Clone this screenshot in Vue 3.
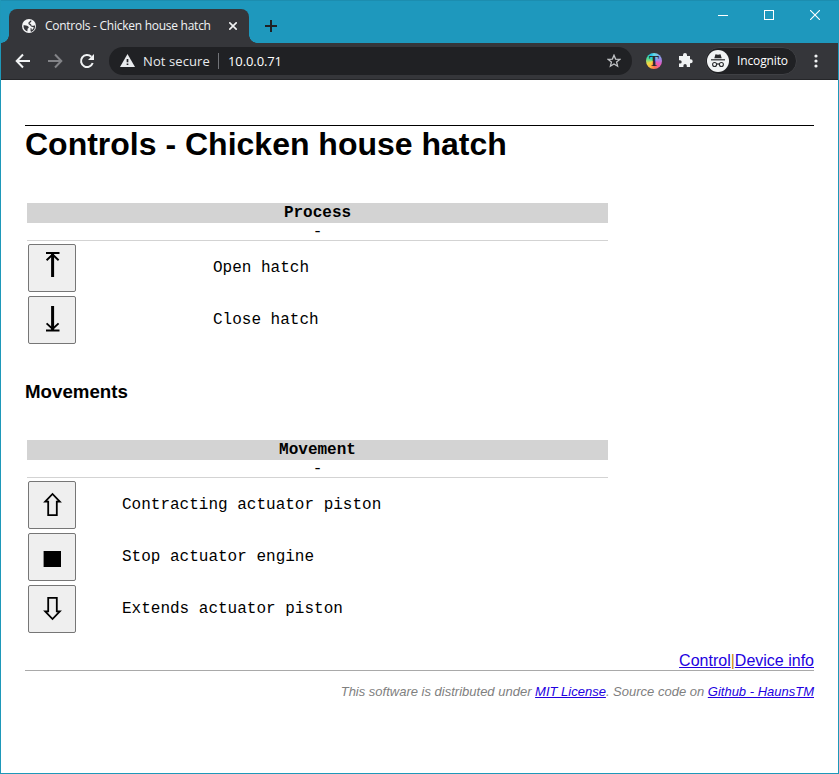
<script setup>
const processes = [
  { icon: 'top', label: 'Open hatch' },
  { icon: 'bottom', label: 'Close hatch' },
]
const movements = [
  { icon: 'up', label: 'Contracting actuator piston' },
  { icon: 'stop', label: 'Stop actuator engine' },
  { icon: 'down', label: 'Extends actuator piston' },
]
const sections = [
  { name: 'process', title: 'Process', rows: processes },
  { name: 'movement', title: 'Movement', rows: movements },
]
</script>

<template>
  <div class="window">
    <header class="titlebar">
      <div class="tab">
        <svg class="globe" width="14" height="14" viewBox="0 0 14 14">
          <circle cx="7" cy="7" r="7" fill="#f4f5f6" />
          <path d="M9 1.7C8.8 3.2 7.2 3 6.9 4.2 6.6 5.2 8.6 5 8.9 6.4 9.2 7.6 10.4 7.6 12.5 7.2 12.4 9.4 11.3 11.3 9.3 12.1 8.6 10.8 10 10.2 8.6 9.4" fill="none" stroke="#35363a" stroke-width="1.2" />
          <path d="M1.5 6.2C3 6.2 4.8 6.2 6.3 7.6 7.3 8.6 6.6 9.4 5.6 9.7 5.4 10.8 5.6 11.6 5.3 12.4 2.9 11.7 1.2 9.2 1.5 6.2Z" fill="#35363a" />
        </svg>
        <span class="tab-title">Controls - Chicken house hatch</span>
        <svg class="tab-close" width="8" height="8" viewBox="0 0 8 8"><path d="M.3.3 7.7 7.7M7.7.3.3 7.7" stroke="#f1f3f4" stroke-width="1.6" /></svg>
      </div>
      <svg class="plus" width="12" height="12" viewBox="0 0 12 12"><path d="M6 0V12M0 6H12" stroke="#202124" stroke-width="2" /></svg>
      <div class="controls">
        <svg width="10" height="11" viewBox="0 0 10 11"><path d="M0 5.5H10" stroke="#fff" /></svg>
        <svg width="10" height="10" viewBox="0 0 10 10"><rect x=".5" y=".5" width="9" height="9" fill="none" stroke="#fff" /></svg>
        <svg width="10" height="10" viewBox="0 0 10 10"><path d="M0 0 10 10M10 0 0 10" stroke="#fff" stroke-width="1.1" /></svg>
      </div>
    </header>

    <nav class="toolbar">
      <svg class="nav-icon" width="16" height="16" viewBox="0 0 16 16"><path d="M15 8H2M8 1.5 1.7 8 8 14.5" fill="none" stroke="#f1f3f4" stroke-width="2" /></svg>
      <svg class="nav-icon" width="16" height="16" viewBox="0 0 16 16"><path d="M1 8H14M8 1.5 14.3 8 8 14.5" fill="none" stroke="#838488" stroke-width="2" /></svg>
      <svg class="nav-icon" width="16" height="16" viewBox="0 0 16 16"><path d="M13.7 10A6 6 0 1 1 12.3 3.8" fill="none" stroke="#f1f3f4" stroke-width="2" /><path d="M15 1V7H9Z" fill="#f1f3f4" /></svg>
      <div class="address">
        <svg class="warn" width="15" height="13" viewBox="0 0 15 13"><path d="M7.5 0 15 13H0Z" fill="#e8eaed" /><path d="M7.5 5V8.2M7.5 9.4V11.1" stroke="#202124" stroke-width="1.7" /></svg>
        <span class="secure">Not secure</span>
        <i class="divider"></i>
        <span class="url">10.0.0.71</span>
        <svg class="star" width="14" height="14" viewBox="0 0 14 14"><path d="M7 1.2 8.6 5.1 12.8 5.4 9.6 8.1 10.6 12.2 7 10 3.4 12.2 4.4 8.1 1.2 5.4 5.4 5.1Z" fill="none" stroke="#c3c5c8" stroke-width="1.3" /></svg>
      </div>
      <div class="extension"><span>T</span></div>
      <svg class="puzzle" width="15" height="15" viewBox="0 0 15 15"><path d="M1.8 3H5V2A2 2 0 0 1 9 2V3H12V6.3H12.7A2 2 0 0 1 12.7 10.3H12V14H8.8V12.8A1.7 1.7 0 0 0 5.4 12.8V14H1V10.6H2A1.7 1.7 0 0 0 2 7.2H1V3Z" fill="#f1f3f4" /></svg>
      <div class="incognito">
        <svg width="22" height="22" viewBox="0 0 22 22">
          <circle cx="11" cy="11" r="11" fill="#f1f3f4" />
          <path d="M7.3 8.2 8.5 4.2 11 4.8 13.5 4.2 14.7 8.2Z" fill="#292a2d" />
          <path d="M4 9.8H18" stroke="#292a2d" stroke-width="1.2" />
          <g fill="none" stroke="#292a2d" stroke-width="1.1"><circle cx="7.6" cy="14.5" r="2" /><circle cx="14.4" cy="14.5" r="2" /><path d="M9.6 14.3Q11 13.5 12.4 14.3" /></g>
        </svg>
        <span>Incognito</span>
      </div>
      <svg class="dots" width="4" height="14" viewBox="0 0 4 14" fill="#f1f3f4"><circle cx="2" cy="2" r="1.6" /><circle cx="2" cy="7" r="1.6" /><circle cx="2" cy="12" r="1.6" /></svg>
    </nav>

    <main class="page">
      <h1>Controls - Chicken house hatch</h1>
      <template v-for="section in sections" :key="section.name">
        <h3 v-if="section.name === 'movement'">Movements</h3>
        <section class="panel" :class="section.name">
          <div class="panel-title">{{ section.title }}</div>
          <div class="panel-state">-</div>
          <div v-for="row in section.rows" :key="row.label" class="row">
            <button type="button">
              <svg width="46" height="46" viewBox="0 0 46 46">
                <g v-if="row.icon === 'top'" fill="none" stroke="#000"><path d="M17 8H30.5" stroke-width="2" /><path d="M23.6 9V32" stroke-width="3" /><path d="M17.6 15.2 23.6 9.5 29.6 15.2" stroke-width="1.9" /></g>
                <g v-else-if="row.icon === 'bottom'" fill="none" stroke="#000"><path d="M17 33.5H30.5" stroke-width="2" /><path d="M23.6 9V33" stroke-width="3" /><path d="M17.6 26.4 23.6 32 29.6 26.4" stroke-width="1.9" /></g>
                <path v-else-if="row.icon === 'up'" d="M19.2 33.2V19.6H16.2L23.5 12 30.8 19.6H27.8V33.2Z" fill="none" stroke="#000" stroke-width="1.8" />
                <path v-else-if="row.icon === 'stop'" d="M14.6 17H32V33H14.6Z" />
                <path v-else d="M19.2 11.8V25.4H16.2L23.5 33 30.8 25.4H27.8V11.8Z" fill="none" stroke="#000" stroke-width="1.8" />
              </svg>
            </button>
            <span>{{ row.label }}</span>
          </div>
        </section>
      </template>
      <div class="links"><a>Control</a><b>|</b><a>Device info</a></div>
      <footer>This software is distributed under <a>MIT License</a>. Source code on <a>Github - HaunsTM</a></footer>
    </main>
  </div>
</template>

<style>
body { margin: 0; background: #fff; }
</style>

<style scoped>
* { box-sizing: border-box; }
svg { display: block; flex: none; }
.window { width: 839px; height: 774px; display: flex; flex-direction: column; border: solid #1e98b9; border-width: 0 1px 1px; background: #fff; overflow: hidden; font-family: "Liberation Sans", Arial, sans-serif; color: #000; }
.titlebar { flex: none; height: 43px; display: flex; align-items: flex-start; padding-left: 8px; background: #1e98bd; border-top: 1px solid #1c8daf; }
.tab { position: relative; width: 240px; height: 34px; margin-top: 8px; padding: 0 12px 0 13px; display: flex; align-items: center; background: #35363a; border-radius: 8px 8px 0 0; }
.tab::before, .tab::after { content: ""; position: absolute; bottom: 0; width: 8px; height: 8px; }
.tab::before { left: -8px; background: radial-gradient(circle at 0 0, transparent 7.5px, #35363a 8px); }
.tab::after { right: -8px; background: radial-gradient(circle at 100% 0, transparent 7.5px, #35363a 8px); }
.tab-title { width: 168px; margin-left: 9px; font: 12px/16px "Open Sans", "Noto Sans", sans-serif; letter-spacing: -.26px; color: #f1f3f4; white-space: nowrap; }
.tab-close { margin-left: auto; }
.plus { margin: 19px 0 0 16px; }
.controls { display: flex; gap: 36px; margin: 9px 18px 0 auto; }
.toolbar { flex: none; height: 37px; display: flex; align-items: center; padding: 0 0 1px 14px; background: #35363a; border-bottom: 1px solid #252629; font-family: "Open Sans", "Noto Sans", sans-serif; color: #fff; }
.nav-icon { margin-right: 16px; }
.address { width: 523px; height: 28px; margin-left: -2px; border-radius: 14px; background: #202124; display: flex; align-items: center; padding: 0 11px; font-size: 13px; white-space: nowrap; }
.secure { width: 67px; margin-left: 8px; letter-spacing: .1px; color: #e8eaed; }
.divider { width: 1px; height: 16px; margin: 0 9px 0 8px; background: #717377; }
.url { letter-spacing: -.1px; }
.star { margin-left: auto; }
.extension { width: 16px; height: 16px; margin-left: 14px; border-radius: 50%; background: conic-gradient(#66dce3, #9a8be8 75deg, #ed55be 120deg, #fb6f50 175deg, #ffbd3e 215deg, #eadc45 250deg, #42dba0 295deg, #22bfef 335deg, #66dce3); display: flex; align-items: center; justify-content: center; font: bold 15px/16px "Liberation Serif", serif; color: #292a2d; }
.puzzle { margin-left: 16px; }
.incognito { width: 92px; height: 28px; margin-left: 12px; padding-left: 1px; display: flex; align-items: center; border: 1px solid #3f4044; border-radius: 14px; background: #202124; font-size: 12px; letter-spacing: -.13px; }
.incognito span { margin-left: 8px; }
.dots { margin-left: 17px; }
.page { flex: 1; padding: 45px 24px 0; }
h1 { margin: 0 0 40px; border-top: 1px solid #000; font-size: 32px; line-height: 37px; }
h3 { margin: 37px 0; font-size: 18.72px; line-height: 22px; }
.panel { width: 581px; margin-left: 2px; font: 16px/18px "Liberation Mono", "Courier New", monospace; }
.panel-title { height: 20px; padding-top: 1px; background: #d3d3d3; text-align: center; font-weight: bold; }
.panel-state { height: 18px; margin-bottom: 3px; border-bottom: 1px solid #d3d3d3; line-height: 18px; text-align: center; }
.row { display: grid; grid-template-columns: 185px 1fr; align-items: center; height: 48px; margin: 0 0 4px 1px; }
.movement .row { grid-template-columns: 94px 1fr; }
.row:last-child { margin-bottom: 0; }
button { width: 48px; height: 48px; padding: 0; border: 1px solid #767676; border-radius: 2px; background: #efefef; }
.links { display: flex; justify-content: flex-end; height: 20px; margin-top: 18px; border-bottom: 1px solid #a9a9a9; font-size: 16px; line-height: 20px; }
.links b { font-weight: normal; color: #c58b12; }
a { color: #2200e0; text-decoration: underline; }
footer { margin-top: 13px; text-align: right; font-size: 13px; line-height: 15px; font-style: italic; color: #808080; }
</style>
